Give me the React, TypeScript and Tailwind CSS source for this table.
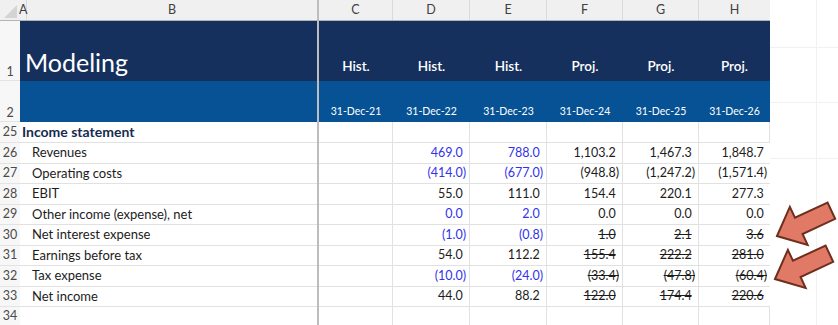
import React from "react";

type Cell = { v: string; blue?: boolean; strike?: boolean };

const COLS = [
  { key: "C", w: "w-[74px]", top: "Hist.", date: "31-Dec-21" },
  { key: "D", w: "w-[77px]", top: "Hist.", date: "31-Dec-22" },
  { key: "E", w: "w-[77px]", top: "Hist.", date: "31-Dec-23" },
  { key: "F", w: "w-[76px]", top: "Proj.", date: "31-Dec-24" },
  { key: "G", w: "w-[76px]", top: "Proj.", date: "31-Dec-25" },
  { key: "H", w: "w-[71px]", top: "Proj.", date: "31-Dec-26" },
];

const b = (v: string): Cell => ({ v, blue: true });
const k = (v: string): Cell => ({ v });
const s = (v: string): Cell => ({ v, strike: true });
const e: Cell = { v: "" };

const ROWS: { n: number; label: string; cells: Cell[] }[] = [
  { n: 26, label: "Revenues", cells: [e, b("469.0"), b("788.0"), k("1,103.2"), k("1,467.3"), k("1,848.7")] },
  { n: 27, label: "Operating costs", cells: [e, b("(414.0)"), b("(677.0)"), k("(948.8)"), k("(1,247.2)"), k("(1,571.4)")] },
  { n: 28, label: "EBIT", cells: [e, k("55.0"), k("111.0"), k("154.4"), k("220.1"), k("277.3")] },
  { n: 29, label: "Other income (expense), net", cells: [e, b("0.0"), b("2.0"), k("0.0"), k("0.0"), k("0.0")] },
  { n: 30, label: "Net interest expense", cells: [e, b("(1.0)"), b("(0.8)"), s("1.0"), s("2.1"), s("3.6")] },
  { n: 31, label: "Earnings before tax", cells: [e, k("54.0"), k("112.2"), s("155.4"), s("222.2"), s("281.0")] },
  { n: 32, label: "Tax expense", cells: [e, b("(10.0)"), b("(24.0)"), s("(33.4)"), s("(47.8)"), s("(60.4)")] },
  { n: 33, label: "Net income", cells: [e, k("44.0"), k("88.2"), s("122.0"), s("174.4"), s("220.6")] },
];

const Num: React.FC<{ c: Cell }> = ({ c }) => {
  if (!c.v) return null;
  const neg = c.v.startsWith("(");
  return (
    <span
      className={`${c.blue ? "text-[#3232ec]" : "text-[#1c1c1c]"} ${c.strike ? "line-through decoration-[#1c1c1c]" : ""}`}
    >
      {c.v}
      {!neg && <span className="invisible">)</span>}
    </span>
  );
};

const Freeze = () => <div className="w-[2px] shrink-0 self-stretch bg-[#bdbdbd]" />;

const Gutter: React.FC<{ n?: string | number; bottom?: boolean }> = ({ n, bottom }) => (
  <div
    className={`w-[20px] shrink-0 flex justify-center border-b border-[#e3e3e3] bg-[#f7f7f7] text-[12.5px] text-[#4a4a4a] ${
      bottom ? "items-end pb-[2px]" : "items-center"
    }`}
  >
    {n}
  </div>
);

export default function App() {
  return (
    <div className="relative w-[838px] h-[325px] overflow-hidden bg-white font-['Lato','Liberation_Sans',sans-serif] leading-none">
      <div className="flex">
        <div className="flex flex-col w-[770px] shrink-0">
          {/* column letters */}
          <div className="flex h-[21px] bg-[#f0f0f0] border-b border-[#b4b4b4] text-[12.5px] text-[#404040]">
            <div className="w-[20px] shrink-0 relative">
              <svg width="20" height="20" className="absolute left-0 top-0">
                <polygon points="17,5 17,18 4,18" fill="#d4d4d4" />
              </svg>
            </div>
            <div className="w-[7px] shrink-0 flex items-center justify-start border-r border-[#dadada]">
              <span className="-ml-[1px]">A</span>
            </div>
            <div className="w-[290px] shrink-0 flex items-center justify-center">B</div>
            <Freeze />
            {COLS.map((c) => (
              <div key={c.key} className={`${c.w} shrink-0 flex items-center justify-center border-r border-[#dadada] last:border-r-0`}>
                {c.key}
              </div>
            ))}
          </div>

          {/* row 1 */}
          <div className="flex h-[60px]">
            <Gutter n={1} bottom />
            <div className="w-[297px] shrink-0 bg-[#16305e] flex items-end pl-[5px] pb-[6px] text-[25px] text-white">
              Modeling
            </div>
            <Freeze />
            {COLS.map((c) => (
              <div key={c.key} className={`${c.w} shrink-0 bg-[#16305e] flex items-end justify-center pb-[8px] text-[13.5px] font-semibold text-white`}>
                {c.top}
              </div>
            ))}
          </div>

          {/* row 2 */}
          <div className="flex h-[41px]">
            <Gutter n={2} bottom />
            <div className="w-[297px] shrink-0 bg-[#065294]" />
            <Freeze />
            {COLS.map((c) => (
              <div key={c.key} className={`${c.w} shrink-0 bg-[#065294] flex items-end justify-center pb-[6px] text-[10.5px] text-white`}>
                {c.date}
              </div>
            ))}
          </div>

          {/* row 25 */}
          <div className="flex h-[21px]">
            <Gutter n={25} />
            <div className="w-[297px] shrink-0 flex items-center pl-[2px] border-b border-[#e1e1e1] text-[14px] font-bold text-[#172b50]">
              Income statement
            </div>
            <Freeze />
            {COLS.map((c) => (
              <div key={c.key} className={`${c.w} shrink-0 border-b border-r border-[#e1e1e1]`} />
            ))}
          </div>

          {ROWS.map((r) => (
            <div key={r.n} className="flex h-[20.5px]">
              <Gutter n={r.n} />
              <div className="w-[297px] shrink-0 flex items-center pl-[12px] border-b border-[#e1e1e1] text-[13px] text-[#1c1c1c]">
                {r.label}
              </div>
              <Freeze />
              {COLS.map((c, i) => (
                <div
                  key={c.key}
                  className={`${c.w} shrink-0 flex items-center justify-end pr-[3px] border-b border-r border-[#e1e1e1] text-[12.5px] whitespace-nowrap overflow-hidden ${
                    i === 5 ? "pr-[1px] border-r-0" : ""
                  }`}
                >
                  <Num c={r.cells[i]} />
                </div>
              ))}
            </div>
          ))}

          {/* row 34 */}
          <div className="flex h-[20px]">
            <Gutter n={34} />
            <div className="w-[297px] shrink-0" />
            <Freeze />
            {COLS.map((c) => (
              <div key={c.key} className={`${c.w} shrink-0 border-r border-[#e1e1e1]`} />
            ))}
          </div>
        </div>

        {/* faint background grid beyond the sheet */}
        <div className="grid grid-cols-[47px_21px] grid-rows-[48px_55px_56px_1fr] flex-1">
          <div className="border-r border-b border-[#f1f1f1]" />
          <div className="border-b border-[#f1f1f1]" />
          <div className="border-r border-b border-[#f1f1f1]" />
          <div className="border-b border-[#f1f1f1]" />
          <div className="border-r border-b border-[#f1f1f1]" />
          <div className="border-b border-[#f1f1f1]" />
          <div className="border-r border-[#f1f1f1]" />
          <div />
        </div>
      </div>

      {/* callout arrows */}
      <svg width="838" height="325" className="absolute inset-0 pointer-events-none">
        <polygon
          points="0,0 24,-21 24,-9 60,-9 60,9 24,9 24,21"
          transform="translate(777 236) rotate(-25)"
          fill="#e07a66"
          stroke="#6e2f1e"
          strokeWidth="2"
          strokeLinejoin="miter"
        />
        <polygon
          points="0,0 24,-21 24,-9 60,-9 60,9 24,9 24,21"
          transform="translate(775 279) rotate(-25)"
          fill="#e07a66"
          stroke="#6e2f1e"
          strokeWidth="2"
          strokeLinejoin="miter"
        />
      </svg>
    </div>
  );
}
